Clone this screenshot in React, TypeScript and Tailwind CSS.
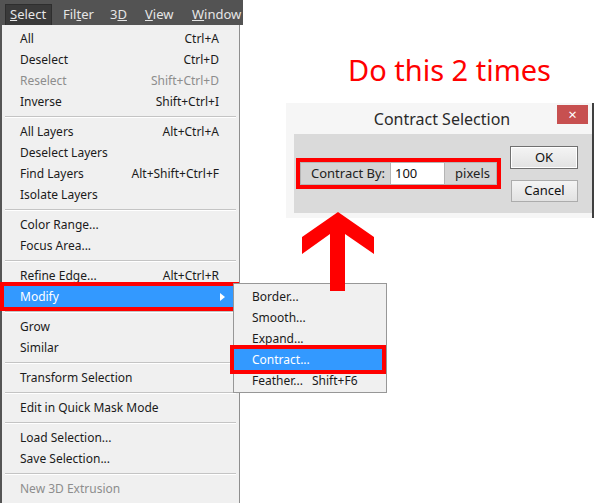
import React from "react";

type Item =
  | { sep: true }
  | { label: string; sc?: string; dis?: boolean; hl?: boolean; sub?: boolean };

const items: Item[] = [
  { label: "All", sc: "Ctrl+A" },
  { label: "Deselect", sc: "Ctrl+D" },
  { label: "Reselect", sc: "Shift+Ctrl+D", dis: true },
  { label: "Inverse", sc: "Shift+Ctrl+I" },
  { sep: true },
  { label: "All Layers", sc: "Alt+Ctrl+A" },
  { label: "Deselect Layers" },
  { label: "Find Layers", sc: "Alt+Shift+Ctrl+F" },
  { label: "Isolate Layers" },
  { sep: true },
  { label: "Color Range..." },
  { label: "Focus Area..." },
  { sep: true },
  { label: "Refine Edge...", sc: "Alt+Ctrl+R" },
  { label: "Modify", hl: true, sub: true },
  { sep: true },
  { label: "Grow" },
  { label: "Similar" },
  { sep: true },
  { label: "Transform Selection" },
  { sep: true },
  { label: "Edit in Quick Mask Mode" },
  { sep: true },
  { label: "Load Selection..." },
  { label: "Save Selection..." },
  { sep: true },
  { label: "New 3D Extrusion", dis: true },
];

const subItems = [
  { label: "Border..." },
  { label: "Smooth..." },
  { label: "Expand..." },
  { label: "Contract...", hl: true },
  { label: "Feather...", sc: "Shift+F6" },
];

const font = { fontFamily: '"Noto Sans", "Open Sans", sans-serif' };

export default function App() {
  return (
    <div
      className="relative w-[600px] h-[503px] bg-white overflow-hidden text-[12px] text-[#1b1b1b]"
      style={font}
    >
      {/* Menu bar */}
      <div className="flex h-[25px] w-[243px] bg-[#535353] text-[13px] text-[#e6e6e6] items-end whitespace-nowrap">
        <div className="ml-[5px] h-[21px] w-[47px] shrink-0 bg-[#3a3a3a] border border-[#2e2e2e] border-b-0 pl-[4px] flex items-center">
          <span>
            <span className="underline">S</span>elect
          </span>
        </div>
        <div className="h-[21px] w-[58px] shrink-0 pl-[11px] flex items-center">
          <span>
            Fil<span className="underline">t</span>er
          </span>
        </div>
        <div className="h-[21px] w-[35px] shrink-0 flex items-center">
          <span>
            3<span className="underline">D</span>
          </span>
        </div>
        <div className="h-[21px] w-[47px] shrink-0 flex items-center">
          <span>
            <span className="underline">V</span>iew
          </span>
        </div>
        <div className="h-[21px] flex items-center">
          <span>
            <span className="underline">W</span>indow
          </span>
        </div>
      </div>

      {/* Main menu */}
      <div className="w-[240px] h-[478px] bg-[#f0f0f0] border-l-2 border-l-[#555] border-r border-r-[#8f8f8f] pt-[3px] flex flex-col">
        {items.map((it, i) =>
          "sep" in it ? (
            <div key={i} className="h-[9px] flex items-center ml-[3px] mr-[3px]">
              <div className="w-full h-[2px] border-t border-t-[#c4c4c4] border-b border-b-white" />
            </div>
          ) : (
            <div
              key={i}
              className={
                it.hl
                  ? "h-[21px] ml-[2px] mr-[4px] pl-[16px] pr-[10px] flex items-center justify-between bg-[#3399ff] text-white outline-4 outline-[#ff0000]"
                  : "h-[21px] ml-[2px] mr-[4px] pl-[16px] pr-[16px] flex items-center justify-between"
              }
            >
              <span className={it.dis ? "text-[#8d8d8d]" : ""}>{it.label}</span>
              {it.sc && <span className={it.dis ? "text-[#8d8d8d]" : ""}>{it.sc}</span>}
              {it.sub && (
                <svg width="5" height="8" viewBox="0 0 5 8">
                  <path d="M0 0 L5 4 L0 8 Z" fill="white" />
                </svg>
              )}
            </div>
          )
        )}
      </div>

      {/* Submenu */}
      <div className="absolute left-[233px] top-[283px] w-[154px] h-[110px] bg-[#f0f0f0] border border-[#979797] pt-[2px] flex flex-col whitespace-nowrap">
        {subItems.map((it, i) => (
          <div
            key={i}
            className={
              it.hl
                ? "h-[21px] mr-[4px] pl-[18px] flex items-center bg-[#3399ff] text-white outline-4 outline-[#ff0000]"
                : "h-[21px] mr-[4px] pl-[18px] flex items-center"
            }
          >
            <span className="w-[60px] shrink-0">{it.label}</span>
            {it.sc && <span>{it.sc}</span>}
          </div>
        ))}
      </div>

      {/* Instruction */}
      <div className="absolute left-[348px] top-[50px] text-[29px] leading-[40px] text-[#ff0000]">
        Do this 2 times
      </div>

      {/* Dialog */}
      <div className="absolute left-[286px] top-[103px] w-[308px] h-[115px] bg-[#f6f6f6] border-r-2 border-r-[#3f3f3f] flex flex-col">
        <div className="h-[31px] relative flex items-center justify-center text-[16px] text-[#2a2a2a]">
          <span className="ml-[6px]">Contract Selection</span>
          <div className="absolute right-[4px] top-[2px] w-[31px] h-[19px] bg-[#c75050] flex items-center justify-center text-white text-[15px] leading-none">
            ×
          </div>
        </div>
        <div className="ml-[8px] h-[79px] bg-[#dadada] flex text-[13px]">
          <div className="ml-[6px] mt-[28px] h-[23px] w-[197px] flex outline-4 outline-[#ff0000] bg-[#d4d4d4]">
            <div className="w-[91px] pl-[10px] flex items-center border border-[#b5b5b5] text-[#222]">
              Contract By:
            </div>
            <div className="w-[53px] pl-[4px] flex items-center bg-white border-y border-[#b5b5b5] text-[#111]">
              100
            </div>
            <div className="w-[53px] pr-[6px] flex items-center justify-end border border-[#b5b5b5] text-[#222]">
              pixels
            </div>
          </div>
          <div className="ml-[13px] mt-[12px] flex flex-col gap-[11px]">
            <div className="w-[68px] h-[23px] border border-[#707070] bg-gradient-to-b from-[#f4f4f4] to-[#e2e2e2] flex items-center justify-center text-[#111] shadow-[inset_0_0_0_1px_#fff]">
              OK
            </div>
            <div className="ml-[1px] w-[67px] h-[22px] border border-[#acacac] bg-gradient-to-b from-[#f4f4f4] to-[#e2e2e2] flex items-center justify-center text-[#111]">
              Cancel
            </div>
          </div>
        </div>
      </div>

      {/* Red arrow */}
      <svg className="absolute left-0 top-0" width="600" height="503" viewBox="0 0 600 503" style={{ pointerEvents: "none" }}>
        <polygon
          points="338,212 374,237 374,254 345,234 345,291 330,291 330,234 302,254 302,237"
          fill="#ff0000"
        />
      </svg>
    </div>
  );
}
